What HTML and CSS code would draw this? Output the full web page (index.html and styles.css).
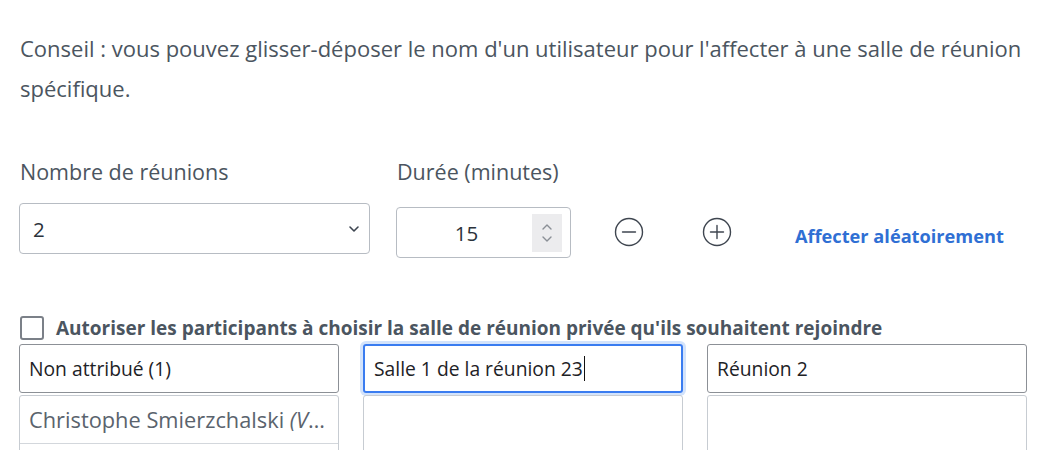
FILE: index.html
```html
<!DOCTYPE html>
<html lang="fr">
<head>
  <meta charset="UTF-8">
  <title>Salles de réunion</title>
  <meta name="viewport" content="width=device-width, initial-scale=1.0">
  <link rel="stylesheet" href="styles.css">
</head>
<body>
  <div class="page">
    <p class="hint">Conseil : vous pouvez glisser-déposer le nom d'un utilisateur pour l'affecter à une salle de réunion spécifique.</p>

    <div class="settings">
      <div class="field count">
        <label>Nombre de réunions</label>
        <div class="select">
          <span>2</span>
          <svg width="12" height="8" viewBox="0 0 12 8"><path d="M2 2l4 4 4-4" fill="none" stroke="#3d4550" stroke-width="1.6" stroke-linecap="round" stroke-linejoin="round"/></svg>
        </div>
      </div>

      <div class="field duration">
        <label>Durée (minutes)</label>
        <div class="number">
          <span class="value">15</span>
          <span class="spin">
            <svg width="14" height="26" viewBox="0 0 14 26"><path d="M3 9l4-4 4 4M3 17l4 4 4-4" fill="none" stroke="#8a8f96" stroke-width="1.4" stroke-linecap="round" stroke-linejoin="round"/></svg>
          </span>
        </div>
      </div>

      <button class="round-btn" title="Retirer">
        <svg width="30" height="30" viewBox="0 0 30 30"><circle cx="15" cy="15" r="13.5" fill="none" stroke="#3f4650" stroke-width="1.4"/><path d="M8.5 15h13" stroke="#3f4650" stroke-width="1.4" stroke-linecap="round"/></svg>
      </button>
      <button class="round-btn" title="Ajouter">
        <svg width="30" height="30" viewBox="0 0 30 30"><circle cx="15" cy="15" r="13.5" fill="none" stroke="#3f4650" stroke-width="1.4"/><path d="M8.5 15h13M15 8.5v13" stroke="#3f4650" stroke-width="1.4" stroke-linecap="round"/></svg>
      </button>

      <a href="#" class="random">Affecter aléatoirement</a>
    </div>

    <label class="check"><span class="box"></span>Autoriser les participants à choisir la salle de réunion privée qu'ils souhaitent rejoindre</label>

    <div class="rooms">
      <div class="room">
        <div class="room-name">Non attribué (1)</div>
        <ul class="room-list">
          <li>Christophe Smierzchalski <em>(Vous)</em></li>
        </ul>
      </div>
      <div class="room">
        <div class="room-name focused">Salle 1 de la réunion 23<span class="caret"></span></div>
        <ul class="room-list"></ul>
      </div>
      <div class="room">
        <div class="room-name">Réunion 2</div>
        <ul class="room-list"></ul>
      </div>
    </div>
  </div>
</body>
</html>
```

FILE: styles.css
```css
body {
  margin: 0;
  font-family: "Open Sans", Lato, sans-serif;
  color: #4b5560;
  background: #fff;
  overflow: hidden;
}

.page {
  width: 1008px;
  padding: 28px 0 0 19px;
}

.hint {
  margin: 0;
  font-size: 22px;
  line-height: 40px;
  padding-left: 1px;
}

.settings {
  display: flex;
  align-items: flex-start;
  margin-top: 52px;
}

.field label {
  display: block;
  font-size: 21.5px;
  line-height: 24px;
  padding-left: 1px;
  margin-bottom: 19px;
}

.count {
  width: 351px;
}

.select {
  height: 49px;
  border: 1px solid #b7bcc3;
  border-radius: 4px;
  display: flex;
  align-items: center;
  justify-content: space-between;
  padding: 0 9px 0 13px;
  font-size: 20.5px;
  color: #2b323a;
}

.duration {
  margin-left: 26px;
  width: 175px;
}

.duration label {
  margin-bottom: 23px;
}

.number {
  height: 49px;
  border: 1px solid #b7bcc3;
  border-radius: 4px;
  display: flex;
  align-items: center;
  padding-right: 8px;
  font-size: 20.5px;
  color: #2b323a;
}

.number .value {
  flex: 1;
  text-align: center;
  padding-left: 4px;
}

.spin {
  width: 30px;
  height: 38px;
  background: #ececee;
  display: flex;
  align-items: center;
  justify-content: center;
}

.round-btn {
  background: none;
  border: none;
  padding: 0;
  margin-top: 57px;
  margin-left: 43px;
  width: 30px;
  height: 30px;
  cursor: pointer;
}

.round-btn + .round-btn {
  margin-left: 58px;
}

.random {
  margin-top: 64px;
  margin-left: 63px;
  font-size: 18.2px;
  font-weight: bold;
  color: #2f6fd4;
  text-decoration: none;
}

.check {
  display: flex;
  align-items: center;
  margin-top: 58px;
  font-size: 19px;
  font-weight: bold;
  color: #4b5560;
  line-height: 24px;
}

.check .box {
  width: 20px;
  height: 20px;
  border: 2px solid #7b8088;
  border-radius: 3px;
  margin-right: 12px;
  margin-left: 1px;
}

.rooms {
  display: grid;
  grid-template-columns: repeat(3, minmax(0, 1fr));
  gap: 24px;
  margin-top: 4px;
}

.room-name {
  height: 47px;
  border: 1px solid #8c9096;
  border-radius: 3px;
  display: flex;
  align-items: center;
  padding: 0 9px;
  font-size: 19.3px;
  color: #1e2226;
}

.room-name.focused {
  border: 2px solid #3a7cf0;
  box-shadow: 0 0 0 3px #d3e3fb;
  height: 45px;
  padding: 0 9px;
}

.caret {
  display: inline-block;
  width: 1.5px;
  height: 25px;
  background: #111;
  margin-left: 1px;
}

.room-list {
  list-style: none;
  margin: 2px 0 0;
  padding: 0;
  height: 120px;
  border: 1px solid #c7ccd2;
  border-radius: 3px;
}

.room-list li {
  height: 47px;
  border-bottom: 1px solid #d3d7dc;
  padding: 0 5px 0 9px;
  font-size: 21.8px;
  color: #5a636d;
  white-space: nowrap;
  overflow: hidden;
  text-overflow: ellipsis;
  line-height: 47px;
}
```
